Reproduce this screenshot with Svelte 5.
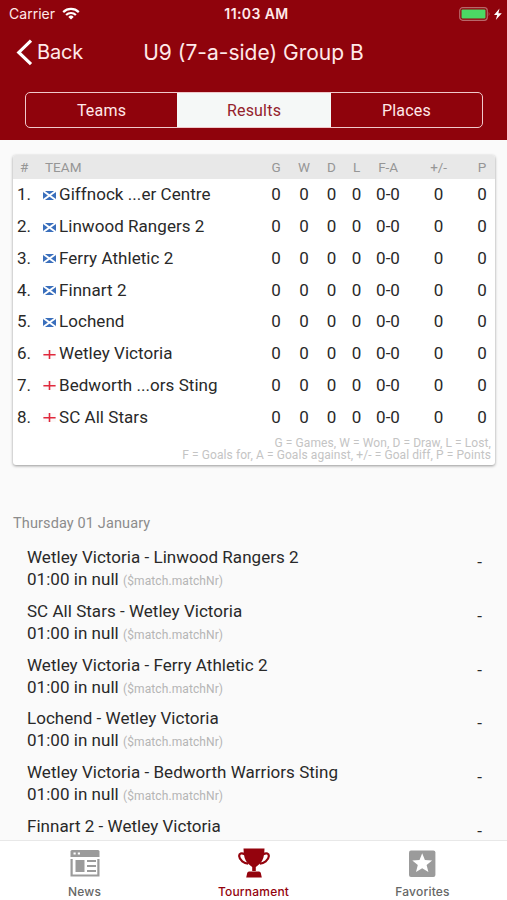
<script lang="ts">
  interface Team {
    name: string;
    country: 'sco' | 'eng';
  }

  const columns = ['G', 'W', 'D', 'L', 'F-A', '+/-', 'P'];
  const stats = ['0', '0', '0', '0', '0-0', '0', '0'];

  const teams: Team[] = [
    { name: 'Giffnock ...er Centre', country: 'sco' },
    { name: 'Linwood Rangers 2', country: 'sco' },
    { name: 'Ferry Athletic 2', country: 'sco' },
    { name: 'Finnart 2', country: 'sco' },
    { name: 'Lochend', country: 'sco' },
    { name: 'Wetley Victoria', country: 'eng' },
    { name: 'Bedworth ...ors Sting', country: 'eng' },
    { name: 'SC All Stars', country: 'eng' },
  ];

  const matches = [
    'Wetley Victoria - Linwood Rangers 2',
    'SC All Stars - Wetley Victoria',
    'Wetley Victoria - Ferry Athletic 2',
    'Lochend - Wetley Victoria',
    'Wetley Victoria - Bedworth Warriors Sting',
    'Finnart 2 - Wetley Victoria',
  ];

  const tabs = ['Teams', 'Results', 'Places'];
  let active = $state('Results');
</script>

<div class="app">
  <header>
    <div class="status">
      <div class="carrier">
        <span>Carrier</span>
        <svg width="18" height="13" viewBox="0 0 18 13" fill="none" stroke="#fff" stroke-width="2.2">
          <path d="M1.2 5.1a11.2 11.2 0 0 1 15.6 0" />
          <path d="M4.1 8a7 7 0 0 1 9.8 0" />
          <path d="M9 12.6 6.3 9.9a3.9 3.9 0 0 1 5.4 0z" fill="#fff" stroke="none" />
        </svg>
      </div>
      <span class="clock">11:03 AM</span>
      <div class="power">
        <svg width="43" height="14" viewBox="0 0 43 14">
          <rect x="0.7" y="0.7" width="27.6" height="12.6" rx="3" fill="none" stroke="#b8686a" stroke-width="1.2" />
          <rect x="2.5" y="2.5" width="24" height="9" rx="1" fill="#4cd964" />
          <path d="M29.7 4.8q1.7 2.2 0 4.4z" fill="#b8686a" />
          <path d="M40.5 1.5 35 8h3.2L36.8 13 42.8 6.2h-3.4z" fill="#fff" />
        </svg>
      </div>
    </div>
    <div class="navbar">
      <button class="back">
        <svg width="17" height="27" viewBox="0 0 17 27" fill="none" stroke="#fff" stroke-width="3.2">
          <path d="M15 1.7 2.8 13.4 15 25.1" />
        </svg>
        <span>Back</span>
      </button>
      <h1>U9 (7-a-side) Group B</h1>
    </div>
    <div class="segments">
      {#each tabs as tab}
        <button class:active={tab === active} onclick={() => (active = tab)}>{tab}</button>
      {/each}
    </div>
  </header>

  <main>
    <section class="card">
      <div class="row head">
        <span class="pos">#</span>
        <span class="team">TEAM</span>
        {#each columns as column}
          <span>{column}</span>
        {/each}
      </div>
      {#each teams as team, i}
        <div class="row">
          <span class="pos">{i + 1}.</span>
          <span class="team">
            {#if team.country === 'sco'}
              <svg class="flag" viewBox="0 0 13 9">
                <rect width="13" height="9" rx="0.8" fill="#3a6fbc" />
                <path d="M0.3 0 12.7 9M12.7 0 0.3 9" stroke="#fff" stroke-width="1.9" />
              </svg>
            {:else}
              <svg class="flag" viewBox="0 0 13 9">
                <rect width="13" height="9" rx="0.8" fill="#fcfafa" />
                <path d="M6.5 0v9M0.4 4.7h12.2" stroke="#e0283c" stroke-width="1.6" />
              </svg>
            {/if}
            {team.name}
          </span>
          {#each stats as value}
            <span>{value}</span>
          {/each}
        </div>
      {/each}
      <p class="legend">
        G = Games, W = Won, D = Draw, L = Lost,<br />
        F = Goals for, A = Goals against, +/- = Goal diff, P = Points
      </p>
    </section>

    <h2>Thursday 01 January</h2>
    {#each matches as match}
      <div class="match">
        <div>
          <div>{match}</div>
          <div>01:00 in null <small>($match.matchNr)</small></div>
        </div>
        <span class="score">-</span>
      </div>
    {/each}
  </main>

  <nav>
    <a class="item" href="#news">
      <svg width="30" height="28" viewBox="0 0 30 28">
        <path d="M2 0h26q1.5 0 1.5 1.5V7H0.5V1.5Q0.5 0 2 0z" fill="#9b9b9b" />
        <path d="M3.5 2.5h2.2v2H3.5zM7.8 2.5h2.2v2H7.8z" fill="#fff" />
        <path d="M1.6 9v16.5h26.8V9" fill="none" stroke="#9b9b9b" stroke-width="2.2" />
        <path d="M5.5 10h9v12h-9zM17 10h9v2h-9zM17 15h9v2h-9zM17 20h9v2h-9z" fill="#9b9b9b" />
      </svg>
      <span>News</span>
    </a>
    <a class="item current" href="#tournament">
      <svg width="32" height="30" viewBox="0 0 32 30" fill="#94030d">
        <path d="M5.5 0.5h21q0 11-4.5 15-2.4 2-4.2 3.5v4h-3.6v-4q-1.8-1.5-4.2-3.5Q5.5 11.500 5.5 .5z" />
        <path d="M6.7 6.2C3.5 4.4 1 5.5 1.2 8.2c.2 4 5 7 9 7.5M25.3 6.2C28.5 4.4 31 5.5 30.8 8.2c-.2 4-5 7-9 7.5" fill="none" stroke="#94030d" stroke-width="2.2" />
        <path d="M11 23.5h10q1.5 0 1.8 1.5l1 4.5H8.2l1-4.5q.3-1.5 1.8-1.5z" />
      </svg>
      <span>Tournament</span>
    </a>
    <a class="item" href="#favorites">
      <svg width="28" height="28" viewBox="0 0 28 28">
        <rect x="0" y="0.5" width="26.4" height="26.5" rx="2" fill="#9b9b9b" />
        <path d="m13.200 3.300 2.700 6.600 7.200.5-5.500 4.600 1.800 7-6.200-3.800L7 22l1.800-7-5.500-4.600 7.200-.5z" fill="#fff" />
      </svg>
      <span>Favorites</span>
    </a>
  </nav>
</div>

<style>
  :global(body) {
    margin: 0;
  }

  .app {
    display: flex;
    flex-direction: column;
    height: 900px;
    overflow: hidden;
    background: #fafafa;
    color: #292929;
    font-family: Roboto, sans-serif;
    font-size: 17px;
    letter-spacing: 0.03px;
  }

  button {
    border: 0;
    padding: 0;
    background: none;
    color: inherit;
    font: inherit;
    letter-spacing: inherit;
  }

  header {
    flex: none;
    box-sizing: border-box;
    height: 140px;
    background: #8f030c;
    color: #ffe9e9;
  }

  .status {
    display: grid;
    grid-template-columns: 1fr auto 1fr;
    align-items: center;
    height: 27px;
    padding: 0 5px 0 9px;
    font-family: Inter, sans-serif;
    font-size: 14px;
  }

  .carrier {
    display: flex;
    align-items: center;
    gap: 7px;
  }

  .clock {
    padding-left: 2px;
    font-weight: 600;
    letter-spacing: 0.4px;
  }

  .power {
    display: flex;
    justify-content: flex-end;
  }

  .navbar {
    display: grid;
    grid-template-columns: 1fr auto 1fr;
    align-items: center;
    height: 50px;
    padding: 0 16px;
    font-family: Inter, sans-serif;
  }

  .back {
    display: flex;
    align-items: center;
    gap: 4px;
    font-size: 20px;
    letter-spacing: -0.2px;
  }

  h1 {
    margin: 0;
    font-size: 21px;
    font-weight: 400;
    letter-spacing: 0;
  }

  .segments {
    display: grid;
    grid-template-columns: 1fr 154px 1fr;
    box-sizing: border-box;
    height: 36px;
    margin: 15px 24px 0 25px;
    border: 1.5px solid #f0c9cb;
    border-radius: 5px;
    overflow: hidden;
    font-size: 16px;
    letter-spacing: 0.2px;
  }

  .segments .active {
    background: #f5f8f7;
    color: #94222c;
  }

  main {
    flex: 1;
    min-height: 0;
    overflow: hidden;
    padding: 15px 12px 0 13px;
  }

  .card {
    box-sizing: border-box;
    height: 310px;
    border-radius: 3px;
    background: #fff;
    box-shadow: 0 1px 3px rgba(0, 0, 0, 0.4);
    overflow: hidden;
  }

  .row {
    display: grid;
    grid-template-columns: 30px 219px 28px 28px 27px 23px 40px 61px 26px;
    align-items: center;
    height: 31.8px;
    margin-top: -0.7px;
    margin-bottom: 0.7px;
    text-align: center;
    white-space: nowrap;
  }

  .row.head {
    height: 24px;
    margin: 0;
    background: #e8e8e8;
    color: #969696;
    font-size: 13.5px;
    letter-spacing: -0.1px;
  }

  .pos {
    padding-left: 4px;
    text-align: left;
  }

  .head .pos { padding-left: 7px; }

  .team {
    display: flex;
    align-items: center;
    gap: 3px;
    letter-spacing: 0.05px;
  }

  .head .team { padding-left: 2px; }

  .flag {
    width: 13px;
    height: 9px;
    margin-top: 2px;
  }

  .legend {
    margin: 4px 4px 0 0;
    color: #c4c4c4;
    font-size: 12px;
    letter-spacing: 0.08px;
    line-height: 12.5px;
    text-align: right;
  }

  h2 {
    margin: 49px 0 13px;
    color: #8c8c8c;
    font-size: 14.5px;
    font-weight: 400;
    letter-spacing: 0.12px;
    line-height: 20px;
  }

  .match {
    display: flex;
    align-items: center;
    justify-content: space-between;
    height: 44px;
    margin-bottom: 9.75px;
    padding: 0 13px 0 14px;
    line-height: 22px;
    white-space: nowrap;
  }

  .match small {
    color: #b5b5b5;
    font-size: 12px;
    letter-spacing: 0.1px;
  }

  .score { padding-bottom: 14px; }

  nav {
    flex: none;
    display: grid;
    grid-template-columns: repeat(3, 1fr);
    box-sizing: border-box;
    height: 60px;
    border-top: 1px solid #e8e8e8;
    background: #fff;
  }

  .item {
    display: flex;
    flex-direction: column;
    align-items: center;
    justify-content: space-between;
    padding: 9px 0 1px;
    color: #666;
    font-family: Inter, sans-serif;
    font-size: 12px;
    font-weight: 500;
    letter-spacing: 0.2px;
    text-decoration: none;
  }

  .item.current {
    padding-top: 7px;
    color: #94030d;
  }
</style>
